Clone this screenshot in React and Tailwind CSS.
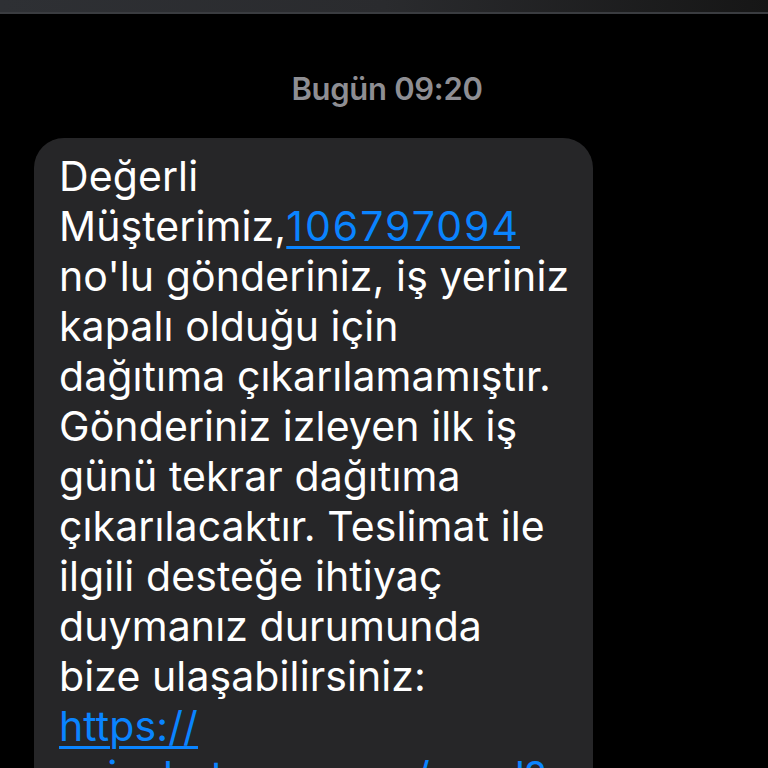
export default function App() {
  const lines = [
    ["Değerli"],
    ["Müşterimiz,", { link: "106797094", digits: true }],
    ["no'lu gönderiniz, iş yeriniz"],
    ["kapalı olduğu için"],
    ["dağıtıma çıkarılamamıştır."],
    ["Gönderiniz izleyen ilk iş"],
    ["günü tekrar dağıtıma"],
    ["çıkarılacaktır. Teslimat ile"],
    ["ilgili desteğe ihtiyaç"],
    ["duymanız durumunda"],
    ["bize ulaşabilirsiniz:"],
    [{ link: "https://" }],
    [{ link: "api.whatsapp.com/send?" }],
  ];
  return (
    <div className="w-[768px] h-[768px] overflow-hidden bg-black" style={{ fontFamily: "Inter, 'Noto Sans', sans-serif" }}>
      <div className="h-[14px] bg-gradient-to-r from-[#2e3034] via-[#2a2b2e] to-[#161616] border-b-2 border-[#3a3c40]" />
      <div className="flex justify-center pt-[57px] pl-[6px] text-[31px] font-semibold text-[#8e8e93] leading-[36px] tracking-[-0.3px]">
        Bugün 09:20
      </div>
      <div className="ml-[34px] mt-[31px] w-[559px] rounded-[30px] bg-[#262628] pl-[25px] pr-[20px] pt-[13px] pb-[20px] text-white text-[41px] leading-[50px] tracking-[0.1px]">
        {lines.map((parts, i) => (
          <div key={i} className="whitespace-nowrap">
            {parts.map((p, j) =>
              typeof p === "string" ? (
                <span key={j}>{p}</span>
              ) : (
                <span
                  key={j}
                  className={
                    p.digits
                      ? "text-[#0a84ff] underline decoration-[3px] underline-offset-[5px] tracking-[2px]"
                      : "text-[#0a84ff] underline decoration-[3px] underline-offset-[5px]"
                  }
                >
                  {p.link}
                </span>
              )
            )}
          </div>
        ))}
      </div>
    </div>
  );
}
